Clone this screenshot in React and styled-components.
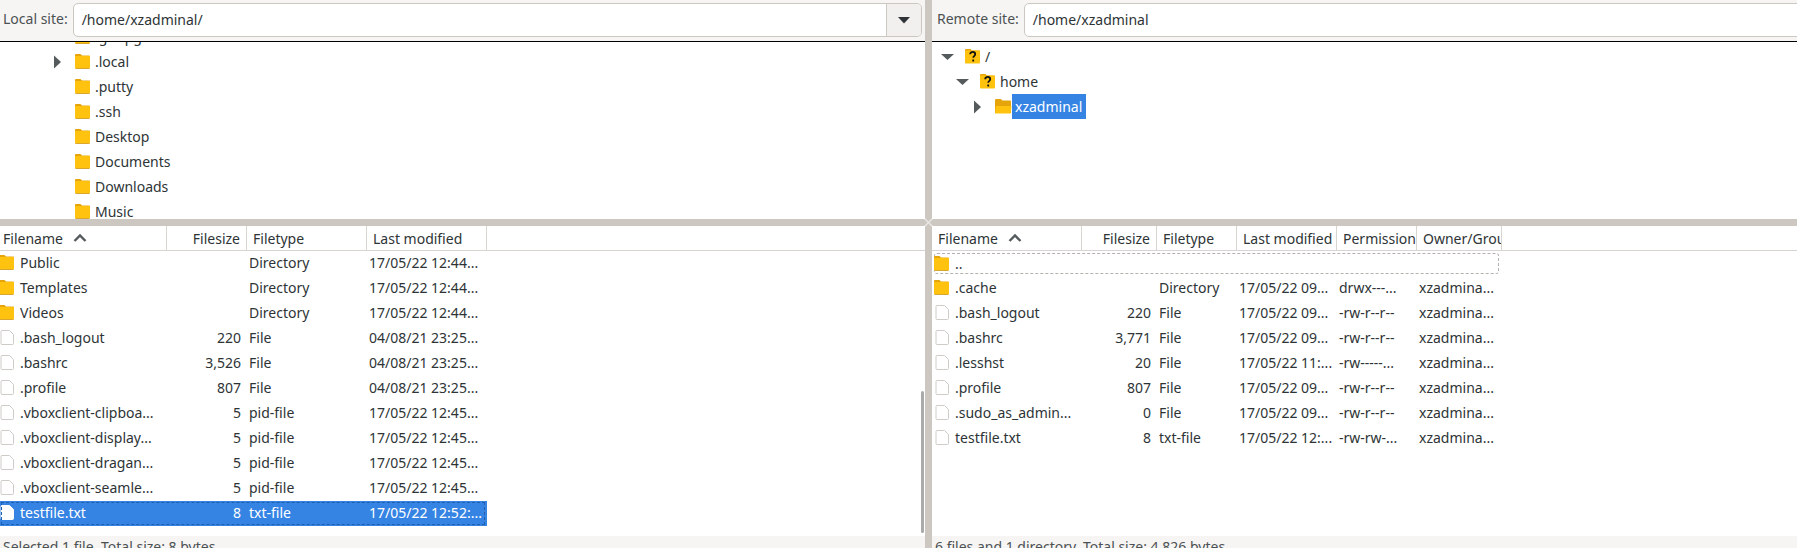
import React from "react";
import styled, { createGlobalStyle } from "styled-components";

const GlobalStyle = createGlobalStyle`
  html, body {
    margin: 0;
    padding: 0;
    background: #ffffff;
    overflow: hidden;
  }
  body {
    font-family: "Noto Sans", "Open Sans", sans-serif;
    font-size: 14px;
    color: #2e3436;
  }
`;

const leftColumns = "167px 80px 120px 120px";
const rightColumns = "150px 75px 80px 100px 80px 85px";

const leftHead = [
  { label: "Filename", sort: true },
  { label: "Filesize", right: true },
  { label: "Filetype" },
  { label: "Last modified" },
];

const rightHead = [
  { label: "Filename", sort: true },
  { label: "Filesize", right: true },
  { label: "Filetype" },
  { label: "Last modified" },
  { label: "Permission" },
  { label: "Owner/Group" },
];

const localFiles = [
  ["folder", "Public", "", "Directory", "17/05/22 12:44..."],
  ["folder", "Templates", "", "Directory", "17/05/22 12:44..."],
  ["folder", "Videos", "", "Directory", "17/05/22 12:44..."],
  ["file", ".bash_logout", "220", "File", "04/08/21 23:25..."],
  ["file", ".bashrc", "3,526", "File", "04/08/21 23:25..."],
  ["file", ".profile", "807", "File", "04/08/21 23:25..."],
  ["file", ".vboxclient-clipboa...", "5", "pid-file", "17/05/22 12:45..."],
  ["file", ".vboxclient-display...", "5", "pid-file", "17/05/22 12:45..."],
  ["file", ".vboxclient-dragan...", "5", "pid-file", "17/05/22 12:45..."],
  ["file", ".vboxclient-seamle...", "5", "pid-file", "17/05/22 12:45..."],
];

const remoteFiles = [
  ["folder", ".cache", "", "Directory", "17/05/22 09...", "drwx---...", "xzadmina..."],
  ["file", ".bash_logout", "220", "File", "17/05/22 09...", "-rw-r--r--", "xzadmina..."],
  ["file", ".bashrc", "3,771", "File", "17/05/22 09...", "-rw-r--r--", "xzadmina..."],
  ["file", ".lesshst", "20", "File", "17/05/22 11:...", "-rw-----...", "xzadmina..."],
  ["file", ".profile", "807", "File", "17/05/22 09...", "-rw-r--r--", "xzadmina..."],
  ["file", ".sudo_as_admin...", "0", "File", "17/05/22 09...", "-rw-r--r--", "xzadmina..."],
  ["file", "testfile.txt", "8", "txt-file", "17/05/22 12:...", "-rw-rw-...", "xzadmina..."],
];

const localTree = [".gnupg", ".local", ".putty", ".ssh", "Desktop", "Documents", "Downloads", "Music"];

const Window = styled.div`
  position: relative;
  width: 1797px;
  height: 548px;
  display: grid;
  grid-template-columns: 925px 865px;
  grid-template-rows: 219px 322px;
  gap: 7px;
  background: #cdc7c2;
  overflow: hidden;
`;

const Pane = styled.section`
  background: #ffffff;
  display: flex;
  flex-direction: column;
  min-height: 0;
  overflow: hidden;
`;

const SashMark = styled.svg`
  position: absolute;
  left: 921px;
  top: 215px;
`;

const SiteBar = styled.div`
  box-sizing: border-box;
  flex: 0 0 42px;
  display: flex;
  align-items: flex-start;
  gap: 5px;
  padding: 3px ${(p) => p.$right}px 0 ${(p) => p.$left}px;
  background: #f6f5f4;
  border-bottom: 1px solid #000000;
`;

const SiteLabel = styled.span`
  color: #4c5153;
  line-height: 31px;
  white-space: nowrap;
`;

const SiteField = styled.div`
  flex: 1;
  box-sizing: border-box;
  height: 34px;
  margin-right: ${(p) => p.$bleed || 0}px;
  display: flex;
  background: #ffffff;
  border: 1px solid #cdc7c2;
  border-radius: 5px;
  overflow: hidden;
`;

const SiteInput = styled.div`
  flex: 1;
  padding: 0 8px;
  line-height: 31px;
  color: #2e3436;
`;

const DropButton = styled.div`
  width: 34px;
  display: flex;
  align-items: center;
  justify-content: center;
  background: #f2f0ee;
  border-left: 1px solid #cdc7c2;
`;

const TreeBody = styled.div`
  flex: 1;
  min-height: 0;
  overflow: hidden;
`;

const TreeScroll = styled.div`
  margin-top: ${(p) => p.$offset}px;
`;

const TreeRow = styled.div`
  height: 25px;
  display: flex;
  align-items: center;
  padding-left: ${(p) => p.$indent}px;
`;

const ArrowSlot = styled.span`
  width: ${(p) => p.$width}px;
  flex: none;
  display: flex;
  align-items: center;
`;

const TreeLabel = styled.span`
  margin-left: ${(p) => (p.$selected ? 0 : 5)}px;
  padding: ${(p) => (p.$selected ? "0 4px 0 3px" : "0")};
  line-height: 25px;
  color: ${(p) => (p.$selected ? "#ffffff" : "#2e3436")};
  background: ${(p) => (p.$selected ? "#3584e4" : "transparent")};
`;

const ListHead = styled.div`
  flex: 0 0 25px;
  box-sizing: border-box;
  display: grid;
  grid-template-columns: ${(p) => p.$columns};
  width: 100%;
  border-bottom: 1px solid #d8d4d0;
`;

const HeadCell = styled.div`
  display: flex;
  align-items: center;
  justify-content: ${(p) => (p.$right ? "flex-end" : "flex-start")};
  gap: 10px;
  padding: 0 6px;
  border-right: 1px solid #d8d4d0;
  white-space: nowrap;
  overflow: hidden;
  color: #2e3436;

  &:first-child {
    padding-left: ${(p) => p.$inset}px;
  }
`;

const ListBody = styled.div`
  flex: 1;
  min-height: 0;
  position: relative;
  overflow: hidden;
`;

const Row = styled.div`
  box-sizing: border-box;
  height: 25px;
  padding-bottom: 2px;
  display: grid;
  grid-template-columns: ${(p) => p.$columns};
  width: ${(p) => p.$width}px;
  align-items: center;
  color: ${(p) => (p.$selected ? "#ffffff" : "#2e3436")};
  background: ${(p) => (p.$selected ? "#3584e4" : "transparent")};
`;

const ParentRow = styled.div`
  box-sizing: border-box;
  height: 21px;
  margin: 2px;
  width: 565px;
  display: flex;
  align-items: center;
  gap: 6px;
  border: 1px dashed #b5b2ae;
  border-radius: 3px;
`;

const NameCell = styled.div`
  display: flex;
  align-items: center;
  gap: 6px;
  padding-left: ${(p) => p.$inset}px;
  white-space: nowrap;
  overflow: hidden;
`;

const Cell = styled.div`
  padding: 0 ${(p) => (p.$right ? "6px" : "2px")};
  text-align: ${(p) => (p.$right ? "right" : "left")};
  white-space: nowrap;
  overflow: hidden;
`;

const SelectedWrap = styled.div`
  position: relative;
  width: 487px;
`;

const SelectedOutline = styled.div`
  position: absolute;
  inset: 1px 2px 1px 1px;
  border: 1px dashed #1f5fae;
  pointer-events: none;
`;

const Scrollbar = styled.div`
  position: absolute;
  right: 1px;
  top: 140px;
  width: 3px;
  height: 142px;
  border-radius: 2px;
  background: #a9abab;
`;

const StatusBar = styled.div`
  flex: 0 0 12px;
  height: 12px;
  overflow: hidden;
  background: #f6f5f4;
  padding-left: 3px;
  line-height: 22px;
  color: #4c5153;
`;

const IconSvg = styled.svg`
  flex: none;
  margin-left: ${(p) => p.$shift || 0}px;
`;

const Caret = ({ dir }) => (
  <svg width="14" height="14" viewBox="0 0 14 14">
    {dir === "down" ? (
      <path d="M0 4h13L6.5 10z" fill="#555a5c" />
    ) : (
      <path d="M0 0.5v13L7 7z" fill="#555a5c" />
    )}
  </svg>
);

const Folder = ({ shift }) => (
  <IconSvg $shift={shift} width="15" height="15" viewBox="0 0 15 15">
    <path d="M1 0h4.5l1.5 1.5h7a1 1 0 0 1 1 1V5H0V1a1 1 0 0 1 1-1z" fill="#e5a50a" />
    <rect x="0" y="2" width="15" height="12.5" rx="1" fill="#ffc30f" />
    <path d="M0.5 14.5h14" stroke="#d9a62e" strokeWidth="1" />
  </IconSvg>
);

const OpenFolder = () => (
  <IconSvg width="17" height="15" viewBox="0 0 17 15">
    <path d="M1 0h5l1.5 1.5H15a1 1 0 0 1 1 1V14H0V1a1 1 0 0 1 1-1z" fill="#e5a50a" />
    <path d="M1 7h15.5L15.5 14.5H0z" fill="#ffc30f" />
  </IconSvg>
);

const UnknownFolder = () => (
  <IconSvg width="15" height="15" viewBox="0 0 15 15">
    <path d="M1 0h4.5l1.5 1.5h7a1 1 0 0 1 1 1V5H0V1a1 1 0 0 1 1-1z" fill="#e5a50a" />
    <rect x="0" y="1.5" width="15" height="13" rx="1" fill="#ffc30f" />
    <path
      d="M5.2 5.2c0-3.2 5-3.2 5 0 0 1.9-2 1.9-2 3.6M8.2 10.5v2"
      fill="none"
      stroke="#111111"
      strokeWidth="1.8"
    />
  </IconSvg>
);

const FileIcon = ({ selected, shift }) => (
  <IconSvg $shift={shift} width="15" height="15" viewBox="0 0 15 15">
    <path
      d="M3 0.5h7.5l4 4v9a1 1 0 0 1-1 1H3a1 1 0 0 1-1-1v-12a1 1 0 0 1 1-1z"
      fill="#ffffff"
      stroke={selected ? "#ffffff" : "#cfccc8"}
    />
  </IconSvg>
);

const SortArrow = () => (
  <svg width="14" height="10" viewBox="0 0 14 10">
    <path d="M1.5 8L7 2.5 12.5 8" fill="none" stroke="#555a5c" strokeWidth="2.4" />
  </svg>
);

const Header = ({ columns, cells, inset }) => (
  <ListHead $columns={columns}>
    {cells.map((c) => (
      <HeadCell key={c.label} $right={c.right} $inset={inset}>
        {c.label}
        {c.sort && <SortArrow />}
      </HeadCell>
    ))}
  </ListHead>
);

const FileRow = ({ file, columns, width, inset, shift, selected }) => {
  const [kind, name, size, ...rest] = file;
  return (
    <Row $columns={columns} $width={width} $selected={selected}>
      <NameCell $inset={inset}>
        {kind === "folder" ? (
          <Folder shift={shift} />
        ) : (
          <FileIcon selected={selected} shift={shift} />
        )}
        {name}
      </NameCell>
      <Cell $right>{size}</Cell>
      {rest.map((v, i) => (
        <Cell key={i}>{v}</Cell>
      ))}
    </Row>
  );
};

export default function App() {
  return (
    <>
      <GlobalStyle />
      <Window>
        <Pane>
          <SiteBar $left={3} $right={3}>
            <SiteLabel>Local site:</SiteLabel>
            <SiteField>
              <SiteInput>/home/xzadminal/</SiteInput>
              <DropButton>
                <svg width="12" height="7" viewBox="0 0 12 7">
                  <path d="M0 0h12L6 6.5z" fill="#2e3436" />
                </svg>
              </DropButton>
            </SiteField>
          </SiteBar>
          <TreeBody>
            <TreeScroll $offset={-18}>
              {localTree.map((name, i) => (
                <TreeRow key={name} $indent={54}>
                  <ArrowSlot $width={21}>{i === 1 && <Caret dir="right" />}</ArrowSlot>
                  <Folder />
                  <TreeLabel>{name}</TreeLabel>
                </TreeRow>
              ))}
            </TreeScroll>
          </TreeBody>
        </Pane>

        <Pane>
          <SiteBar $left={5} $right={0}>
            <SiteLabel>Remote site:</SiteLabel>
            <SiteField $bleed={-6}>
              <SiteInput>/home/xzadminal</SiteInput>
            </SiteField>
          </SiteBar>
          <TreeBody>
            <TreeScroll $offset={2}>
              <TreeRow $indent={9}>
                <ArrowSlot $width={24}>
                  <Caret dir="down" />
                </ArrowSlot>
                <UnknownFolder />
                <TreeLabel>/</TreeLabel>
              </TreeRow>
              <TreeRow $indent={24}>
                <ArrowSlot $width={24}>
                  <Caret dir="down" />
                </ArrowSlot>
                <UnknownFolder />
                <TreeLabel>home</TreeLabel>
              </TreeRow>
              <TreeRow $indent={42}>
                <ArrowSlot $width={21}>
                  <Caret dir="right" />
                </ArrowSlot>
                <OpenFolder />
                <TreeLabel $selected>xzadminal</TreeLabel>
              </TreeRow>
            </TreeScroll>
          </TreeBody>
        </Pane>

        <Pane>
          <Header columns={leftColumns} cells={leftHead} inset={3} />
          <ListBody>
            {localFiles.map((f) => (
              <FileRow key={f[1]} file={f} columns={leftColumns} width={487} inset={0} shift={-1} />
            ))}
            <SelectedWrap>
              <FileRow
                file={["file", "testfile.txt", "8", "txt-file", "17/05/22 12:52:..."]}
                columns={leftColumns}
                width={487}
                inset={0}
                shift={-1}
                selected
              />
              <SelectedOutline />
            </SelectedWrap>
            <Scrollbar />
          </ListBody>
          <StatusBar>Selected 1 file. Total size: 8 bytes</StatusBar>
        </Pane>

        <Pane>
          <Header columns={rightColumns} cells={rightHead} inset={6} />
          <ListBody>
            <ParentRow>
              <Folder shift={-1} />
              ..
            </ParentRow>
            {remoteFiles.map((f) => (
              <FileRow key={f[1]} file={f} columns={rightColumns} width={570} inset={2} />
            ))}
          </ListBody>
          <StatusBar>6 files and 1 directory. Total size: 4,826 bytes</StatusBar>
        </Pane>

        <SashMark width="15" height="15" viewBox="0 0 15 15">
          <path
            d="M2 2l11 11M13 2L2 13"
            stroke="#ffffff"
            strokeOpacity="0.55"
            strokeWidth="1.5"
            strokeLinecap="round"
          />
        </SashMark>
      </Window>
    </>
  );
}
